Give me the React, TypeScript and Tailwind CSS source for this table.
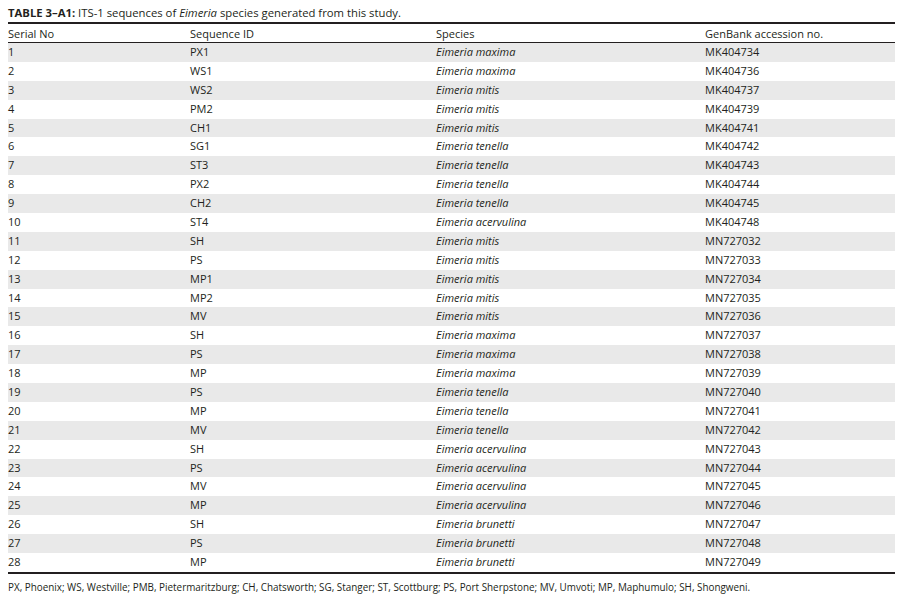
import React from "react";

const rows: [string, string, string, string][] = [
  ["1", "PX1", "Eimeria maxima", "MK404734"],
  ["2", "WS1", "Eimeria maxima", "MK404736"],
  ["3", "WS2", "Eimeria mitis", "MK404737"],
  ["4", "PM2", "Eimeria mitis", "MK404739"],
  ["5", "CH1", "Eimeria mitis", "MK404741"],
  ["6", "SG1", "Eimeria tenella", "MK404742"],
  ["7", "ST3", "Eimeria tenella", "MK404743"],
  ["8", "PX2", "Eimeria tenella", "MK404744"],
  ["9", "CH2", "Eimeria tenella", "MK404745"],
  ["10", "ST4", "Eimeria acervulina", "MK404748"],
  ["11", "SH", "Eimeria mitis", "MN727032"],
  ["12", "PS", "Eimeria mitis", "MN727033"],
  ["13", "MP1", "Eimeria mitis", "MN727034"],
  ["14", "MP2", "Eimeria mitis", "MN727035"],
  ["15", "MV", "Eimeria mitis", "MN727036"],
  ["16", "SH", "Eimeria maxima", "MN727037"],
  ["17", "PS", "Eimeria maxima", "MN727038"],
  ["18", "MP", "Eimeria maxima", "MN727039"],
  ["19", "PS", "Eimeria tenella", "MN727040"],
  ["20", "MP", "Eimeria tenella", "MN727041"],
  ["21", "MV", "Eimeria tenella", "MN727042"],
  ["22", "SH", "Eimeria acervulina", "MN727043"],
  ["23", "PS", "Eimeria acervulina", "MN727044"],
  ["24", "MV", "Eimeria acervulina", "MN727045"],
  ["25", "MP", "Eimeria acervulina", "MN727046"],
  ["26", "SH", "Eimeria brunetti", "MN727047"],
  ["27", "PS", "Eimeria brunetti", "MN727048"],
  ["28", "MP", "Eimeria brunetti", "MN727049"],
];

const cols = "grid grid-cols-[182px_246px_269px_190px]";

export default function App() {
  return (
    <div className="w-[907px] h-[602px] bg-white text-[#231f20] text-[11px] font-['Open_Sans',sans-serif] px-[8px] pt-[4px]">
      <div className="h-[18px] leading-[18px] text-[11.3px] whitespace-nowrap">
        <span className="font-bold">TABLE 3–A1:</span> ITS-1 sequences of{" "}
        <span className="italic">Eimeria</span> species generated from this study.
      </div>
      <div className="w-[887px] border-t-2 border-b-2 border-[#231f20]">
        <div className={`${cols} h-[19px] leading-[19px] border-b border-[#231f20]`}>
          <div>Serial No</div>
          <div>Sequence ID</div>
          <div>Species</div>
          <div>GenBank accession no.</div>
        </div>
        {rows.map((r, i) => (
          <div
            key={i}
            className={`${cols} h-[18.9px] leading-[18.9px] ${i % 2 === 0 ? "bg-[#e9e9e9]" : "bg-white"}`}
          >
            <div>{r[0]}</div>
            <div>{r[1]}</div>
            <div className="italic">{r[2]}</div>
            <div>{r[3]}</div>
          </div>
        ))}
      </div>
      <div className="pt-[6px] leading-[14px] text-[9.9px] whitespace-nowrap">
        PX, Phoenix; WS, Westville; PMB, Pietermaritzburg; CH, Chatsworth; SG, Stanger; ST, Scottburg; PS, Port Sherpstone; MV, Umvoti; MP, Maphumulo; SH, Shongweni.
      </div>
    </div>
  );
}
